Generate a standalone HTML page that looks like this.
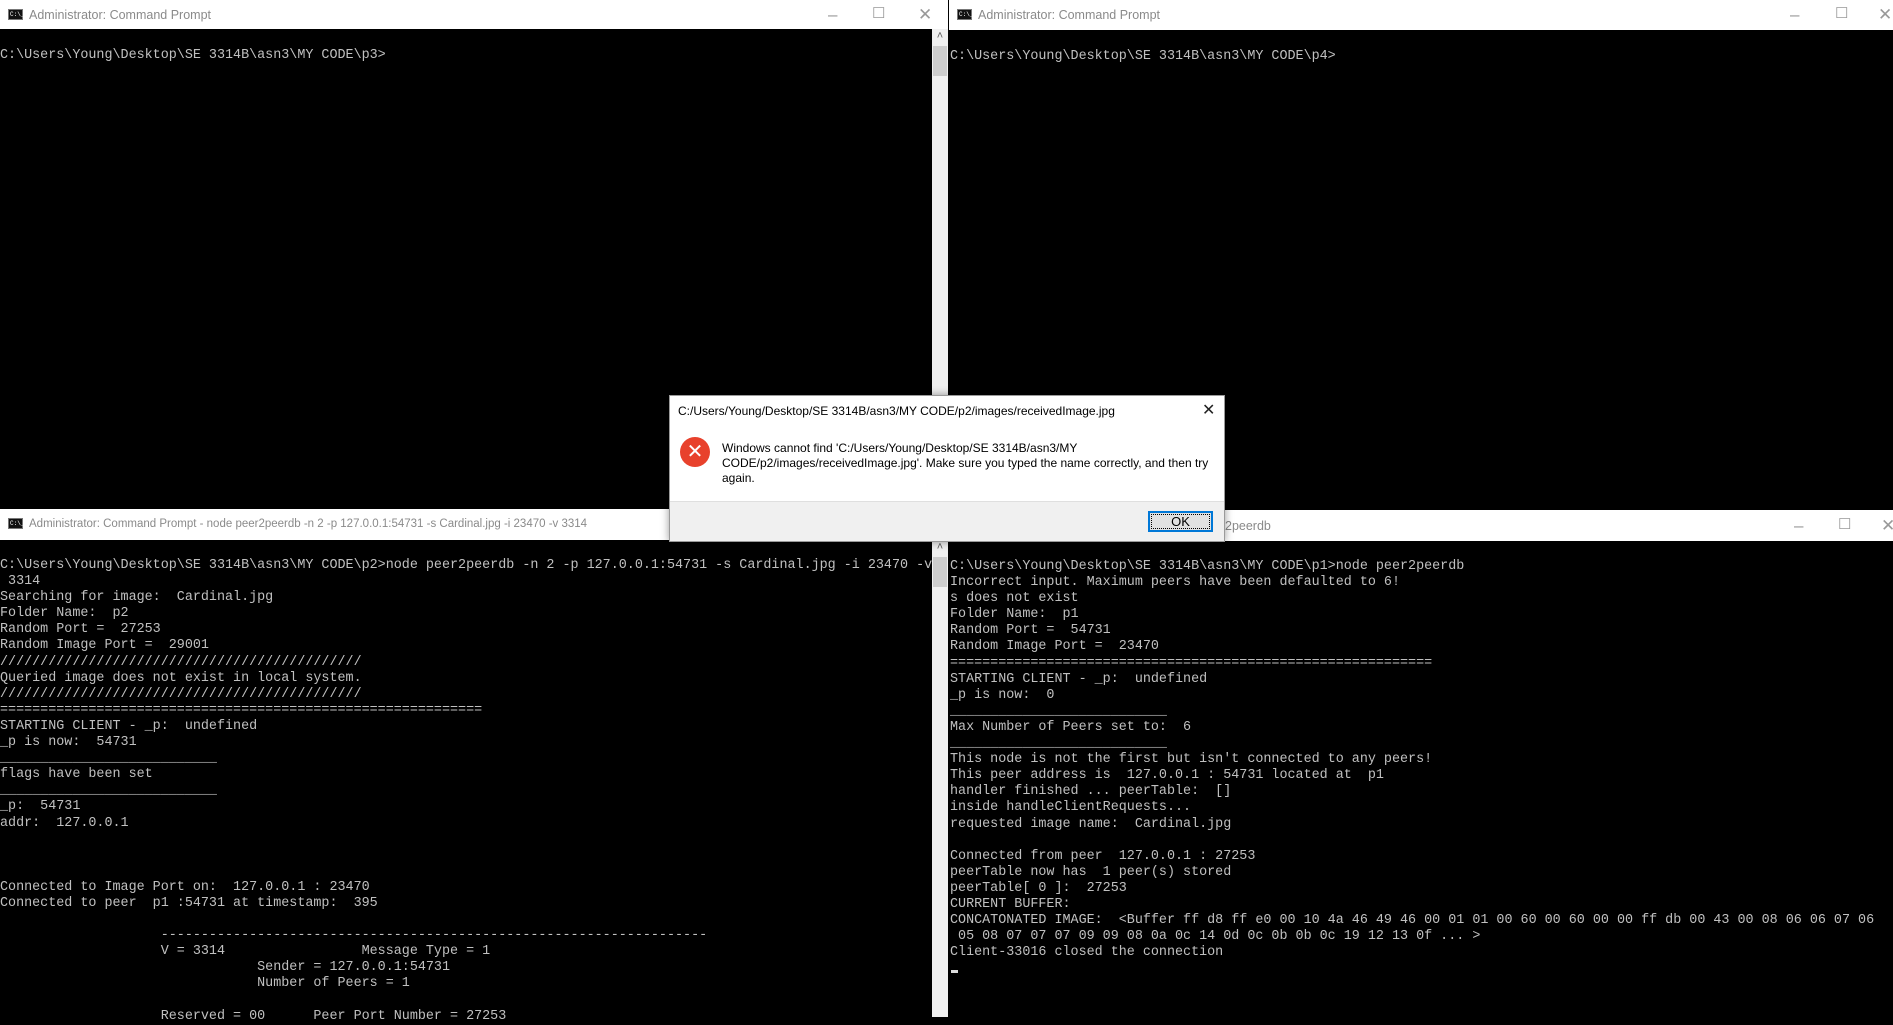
<!DOCTYPE html>
<html><head><meta charset="utf-8"><style>
*{margin:0;padding:0;box-sizing:border-box}
body{width:1893px;height:1017px;background:#000;position:relative;overflow:hidden;font-family:"Liberation Sans",sans-serif}
.abs{position:absolute}
.tb{position:absolute;background:#fff;height:30px}
.tt{position:absolute;top:8px;left:29px;font-size:12.5px;color:#8a8a8a;white-space:nowrap}
.ic{position:absolute;left:8px;top:9px;width:15px;height:11px;background:#111;border:1px solid #777}
.ic:after{content:"C:\\_";position:absolute;left:1px;top:0;font-size:6px;color:#fff;font-family:"Liberation Mono",monospace;line-height:9px}
.ctl{position:absolute;top:5px;font-size:17px;color:#999;font-weight:300}
pre{position:absolute;font-family:"Liberation Mono",monospace;font-size:13.4px;line-height:16.1px;color:#c0c0c0;white-space:pre}
.sb{position:absolute;background:#f0f0f0;width:16px}
.sb .th{position:absolute;left:1px;right:1px;top:17px;height:30px;background:#cdcdcd}
.sb .ar{position:absolute;left:0;right:0;top:1px;text-align:center;font-size:11px;color:#606060}
</style></head><body>

<div class="tb" style="left:0;top:0;width:948px;height:29px">
 <div class="ic"></div><div class="tt">Administrator: Command Prompt</div>
 <div class="ctl" style="left:828px">–</div><div class="ctl" style="left:872px;font-size:15px;top:4px">☐</div><div class="ctl" style="left:918px">✕</div>
</div>
<div class="sb" style="left:932px;top:29px;height:481px"><div class="ar">˄</div><div class="th"></div></div>
<pre style="left:0;top:48px">C:\Users\Young\Desktop\SE 3314B\asn3\MY CODE\p3></pre>

<div class="tb" style="left:949px;top:0;width:944px;height:30px">
 <div class="ic"></div><div class="tt">Administrator: Command Prompt</div>
 <div class="ctl" style="left:841px">–</div><div class="ctl" style="left:886px;font-size:15px;top:4px">☐</div><div class="ctl" style="left:929px">✕</div>
</div>
<pre style="left:950px;top:49px">C:\Users\Young\Desktop\SE 3314B\asn3\MY CODE\p4></pre>

<div class="tb" style="left:0;top:509px;width:948px;height:31px">
 <div class="ic"></div><div class="tt" style="font-size:11.5px;top:9px">Administrator: Command Prompt - node  peer2peerdb -n 2 -p 127.0.0.1:54731 -s Cardinal.jpg -i 23470 -v 3314</div>
</div>
<div class="sb" style="left:932px;top:540px;height:477px"><div class="ar">˄</div><div class="th"></div></div>
<pre style="left:0;top:558px">C:\Users\Young\Desktop\SE 3314B\asn3\MY CODE\p2>node peer2peerdb -n 2 -p 127.0.0.1:54731 -s Cardinal.jpg -i 23470 -v
 3314
Searching for image:  Cardinal.jpg
Folder Name:  p2
Random Port =  27253
Random Image Port =  29001
/////////////////////////////////////////////
Queried image does not exist in local system.
/////////////////////////////////////////////
============================================================
STARTING CLIENT - _p:  undefined
_p is now:  54731
___________________________
flags have been set
___________________________
_p:  54731
addr:  127.0.0.1



Connected to Image Port on:  127.0.0.1 : 23470
Connected to peer  p1 :54731 at timestamp:  395

                    --------------------------------------------------------------------
                    V = 3314                 Message Type = 1
                                Sender = 127.0.0.1:54731
                                Number of Peers = 1

                    Reserved = 00      Peer Port Number = 27253</pre>

<div class="tb" style="left:949px;top:510px;width:944px;height:31px">
 <div class="tt" style="left:276px;top:9px">2peerdb</div>
 <div class="ctl" style="left:845px;top:6px">–</div><div class="ctl" style="left:889px;font-size:15px;top:5px">☐</div><div class="ctl" style="left:932px;top:6px">✕</div>
</div>
<pre style="left:950px;top:559px">C:\Users\Young\Desktop\SE 3314B\asn3\MY CODE\p1>node peer2peerdb
Incorrect input. Maximum peers have been defaulted to 6!
s does not exist
Folder Name:  p1
Random Port =  54731
Random Image Port =  23470
============================================================
STARTING CLIENT - _p:  undefined
_p is now:  0
___________________________
Max Number of Peers set to:  6
___________________________
This node is not the first but isn't connected to any peers!
This peer address is  127.0.0.1 : 54731 located at  p1
handler finished ... peerTable:  []
inside handleClientRequests...
requested image name:  Cardinal.jpg

Connected from peer  127.0.0.1 : 27253
peerTable now has  1 peer(s) stored
peerTable[ 0 ]:  27253
CURRENT BUFFER:
CONCATONATED IMAGE:  &lt;Buffer ff d8 ff e0 00 10 4a 46 49 46 00 01 01 00 60 00 60 00 00 ff db 00 43 00 08 06 06 07 06
 05 08 07 07 07 09 09 08 0a 0c 14 0d 0c 0b 0b 0c 19 12 13 0f ... &gt;
Client-33016 closed the connection
</pre>
<div class="abs" style="left:951px;top:970px;width:7px;height:3px;background:#ddd"></div>

<div class="abs" style="left:669px;top:395px;width:556px;height:147px;background:#fff;border:1px solid #9a9a9a;box-shadow:0 0 8px rgba(0,0,0,.4)">
 <div class="abs" style="left:8px;top:8px;font-size:12px;color:#000;white-space:nowrap">C:/Users/Young/Desktop/SE 3314B/asn3/MY CODE/p2/images/receivedImage.jpg</div>
 <div class="abs" style="left:532px;top:4px;font-size:16px;color:#222">✕</div>
 <div class="abs" style="left:10px;top:41px;width:30px;height:30px;border-radius:50%;background:#e8412c;color:#fff;text-align:center;font-size:20px;line-height:30px">✕</div>
 <div class="abs" style="left:52px;top:45px;width:490px;font-size:12px;line-height:15px;color:#000">Windows cannot find 'C:/Users/Young/Desktop/SE 3314B/asn3/MY CODE/p2/images/receivedImage.jpg'. Make sure you typed the name correctly, and then try again.</div>
 <div class="abs" style="left:0;top:105px;width:554px;height:40px;background:#f0f0f0;border-top:1px solid #dfdfdf"></div>
 <div class="abs" style="left:478px;top:115px;width:65px;height:21px;background:#e1e1e1;border:2px solid #0078d7;font-size:13px;text-align:center;line-height:17px;outline:1px dotted #000;outline-offset:-4px">OK</div>
</div>
</body></html>
